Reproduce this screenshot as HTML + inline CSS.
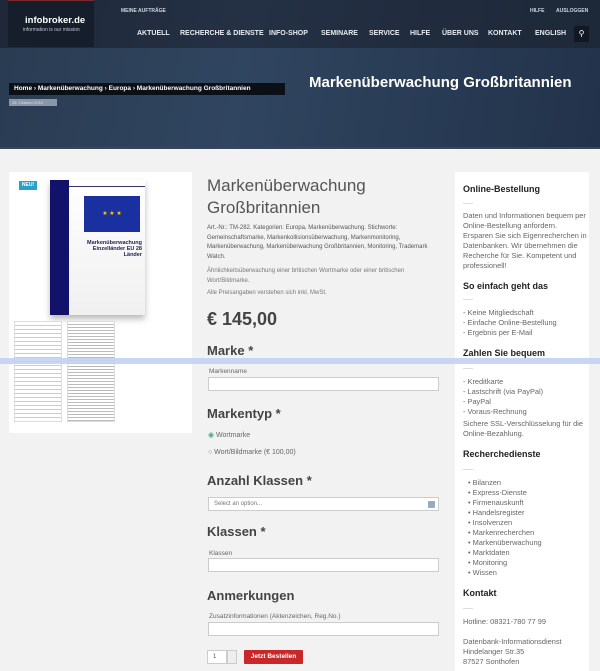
<!DOCTYPE html>
<html><head><meta charset="utf-8"><style>
*{margin:0;padding:0;box-sizing:border-box}
body{width:600px;height:671px;overflow:hidden;background:#f2f2f2;font-family:"Liberation Sans",sans-serif;position:relative;color:#555}
.a{position:absolute}
.hd{left:0;top:0;width:600px;height:48px;background:linear-gradient(100deg,#1e2838 0%,#243044 40%,#1d2838 100%)}
.hero{left:0;top:48px;width:600px;height:100px;background:linear-gradient(100deg,#2a3c52 0%,#304560 40%,#22324a 100%)}
.nav{color:#e8ecf0;font-size:7px;font-weight:bold;top:30px}
.top{color:#cfd6de;font-size:5px;top:8px;font-weight:bold}
.sb h4{font-size:9px;color:#222;font-weight:bold;position:absolute;left:463px}
.sb p{font-size:7.4px;line-height:10px;color:#666;position:absolute;left:463px}
.hr{position:absolute;left:463px;width:10px;height:1px;background:#ddd}
h2{position:absolute;left:207px;font-size:13px;color:#444;font-weight:bold}
.lbl{position:absolute;left:209px;font-size:6.5px;color:#666}
.in{position:absolute;left:208px;width:231px;height:14px;background:#fff;border:1px solid #ccc}
</style></head><body>
<div class="a hd"></div>
<div class="a hero"></div>
<div class="a" style="left:8px;top:0;width:86px;height:47px;background:#161e2b;border-top:1px solid #7a2a2a"></div>
<div class="a" style="left:25px;top:15px;color:#fff;font-size:9.5px;font-weight:bold">infobroker.de</div>
<div class="a" style="left:23px;top:27px;color:#c0c6ce;font-size:5px">information is our mission</div>
<div class="a top" style="left:121px">MEINE AUFTRÄGE</div>
<div class="a top" style="left:530px">HILFE</div>
<div class="a top" style="left:556px">AUSLOGGEN</div>
<div class="a nav" style="left:137px">AKTUELL</div>
<div class="a nav" style="left:180px">RECHERCHE &amp; DIENSTE</div>
<div class="a nav" style="left:269px">INFO-SHOP</div>
<div class="a nav" style="left:321px">SEMINARE</div>
<div class="a nav" style="left:369px">SERVICE</div>
<div class="a nav" style="left:410px">HILFE</div>
<div class="a nav" style="left:442px">ÜBER UNS</div>
<div class="a nav" style="left:488px">KONTAKT</div>
<div class="a nav" style="left:535px">ENGLISH</div>
<div class="a" style="left:574px;top:26px;width:15px;height:16px;background:#111822;color:#fff;font-size:8px;text-align:center;line-height:16px">⚲</div>
<div class="a" style="left:9px;top:83px;width:276px;height:12px;background:#0b0f16;color:#fff;font-size:6.5px;font-weight:bold;line-height:12px;padding-left:5px">Home › Markenüberwachung › Europa › Markenüberwachung Großbritannien</div>
<div class="a" style="left:9px;top:99px;width:48px;height:7px;background:#8a97a6;color:#dde;font-size:4px;line-height:7px;padding-left:3px">28. Oktober 2015</div>
<div class="a" style="left:309px;top:74px;color:#fff;font-size:15px;font-weight:bold">Markenüberwachung Großbritannien</div>
<div class="a" style="left:0;top:147px;width:600px;height:2px;background:#3a4656"></div>

<div class="a" style="left:9px;top:172px;width:183px;height:261px;background:#fff"></div>
<div class="a" style="left:19px;top:181px;width:18px;height:9px;background:#2aa0c8;color:#fff;font-size:5px;font-weight:bold;text-align:center;line-height:9px">NEU!</div>
<div class="a" style="left:50px;top:180px;width:95px;height:135px;background:linear-gradient(#fff,#f0f0f0);box-shadow:0 4px 6px #bbb"></div>
<div class="a" style="left:50px;top:180px;width:19px;height:135px;background:#12126a"></div>
<div class="a" style="left:69px;top:186px;width:76px;height:1px;background:#336"></div>
<div class="a" style="left:84px;top:196px;width:56px;height:36px;background:#1a2fa0;color:#fc0;font-size:6px;text-align:center;line-height:36px">★ ★ ★</div>
<div class="a" style="left:74px;top:240px;width:68px;text-align:right;font-size:5.5px;font-weight:bold;color:#225">Markenüberwachung<br>Einzelländer EU 28 Länder</div>
<div class="a" style="left:14px;top:321px;width:48px;height:101px;background:#fff;border:1px solid #ddd;background-image:repeating-linear-gradient(#fff 0 3px,#ccc 3px 4px)"></div>
<div class="a" style="left:67px;top:321px;width:48px;height:101px;background:#fff;border:1px solid #ddd;background-image:repeating-linear-gradient(#fff 0 2px,#bbb 2px 3px)"></div>

<div class="a" style="left:207px;top:175px;font-size:17px;color:#555;line-height:22px">Markenüberwachung<br>Großbritannien</div>
<div class="a" style="left:207px;top:224px;width:228px;font-size:6px;line-height:9.5px;color:#555">Art.-Nr.: TM-282. Kategorien: Europa, Markenüberwachung. Stichworte: Gemeinschaftsmarke, Markenkollisionsüberwachung, Markenmonitoring, Markenüberwachung, Markenüberwachung Großbritannien, Monitoring, Trademark Watch.</div>
<div class="a" style="left:207px;top:266px;width:205px;font-size:6px;line-height:10px;color:#777">Ähnlichkeitsüberwachung einer britischen Wortmarke oder einer britischen Wort/Bildmarke.</div>
<div class="a" style="left:207px;top:290px;font-size:6px;color:#777">Alle Preisangaben verstehen sich inkl. MwSt.</div>
<div class="a" style="left:207px;top:309px;font-size:18px;font-weight:bold;color:#444">€ 145,00</div>
<h2 style="top:343px">Marke *</h2>
<div class="lbl" style="top:368px">Markenname</div>
<div class="in" style="top:377px"></div>
<h2 style="top:406px">Markentyp *</h2>
<div class="a" style="left:208px;top:431px;font-size:7px;color:#666"><span style="color:#4a8">◉</span> Wortmarke</div>
<div class="a" style="left:208px;top:449px;font-size:7px;color:#666"><span style="color:#68a">○</span> Wort/Bildmarke (€ 100,00)</div>
<h2 style="top:473px">Anzahl Klassen *</h2>
<div class="in" style="top:497px;font-size:6px;color:#777;padding:3px 5px">Select an option...<span style="position:absolute;right:3px;top:3px;width:7px;height:7px;background:#9ab;border-radius:1px"></span></div>
<h2 style="top:524px">Klassen *</h2>
<div class="lbl" style="top:550px">Klassen</div>
<div class="in" style="top:558px"></div>
<h2 style="top:588px">Anmerkungen</h2>
<div class="lbl" style="top:613px">Zusatzinformationen (Aktenzeichen, Reg.No.)</div>
<div class="in" style="top:622px"></div>
<div class="a" style="left:207px;top:650px;width:20px;height:14px;background:#fff;border:1px solid #ccc;font-size:6px;line-height:12px;padding-left:5px">1</div>
<div class="a" style="left:227px;top:650px;width:10px;height:14px;background:#eee;border:1px solid #ccc"></div>
<div class="a" style="left:244px;top:650px;width:59px;height:14px;background:#c8282a;color:#fff;font-size:6.5px;font-weight:bold;text-align:center;line-height:14px;border-radius:1px">Jetzt Bestellen</div>

<div class="a" style="left:455px;top:172px;width:134px;height:499px;background:#fff"></div>
<div class="sb">
<h4 style="top:184px">Online-Bestellung</h4><div class="hr" style="top:203px"></div>
<p style="top:211px;width:124px">Daten und Informationen bequem per Online-Bestellung anfordern. Ersparen Sie sich Eigenrecherchen in Datenbanken. Wir übernehmen die Recherche für Sie. Kompetent und professionell!</p>
<h4 style="top:281px">So einfach geht das</h4><div class="hr" style="top:299px"></div>
<p style="top:308px">- Keine Mitgliedschaft<br>- Einfache Online-Bestellung<br>- Ergebnis per E-Mail</p>
<h4 style="top:348px">Zahlen Sie bequem</h4><div class="hr" style="top:368px"></div>
<p style="top:377px">- Kreditkarte<br>- Lastschrift (via PayPal)<br>- PayPal<br>- Voraus-Rechnung</p>
<p style="top:419px;width:124px">Sichere SSL-Verschlüsselung für die Online-Bezahlung.</p>
<h4 style="top:449px">Recherchedienste</h4><div class="hr" style="top:469px"></div>
<p style="top:478px;left:468px">• Bilanzen<br>• Express-Dienste<br>• Firmenauskunft<br>• Handelsregister<br>• Insolvenzen<br>• Markenrecherchen<br>• Markenüberwachung<br>• Marktdaten<br>• Monitoring<br>• Wissen</p>
<h4 style="top:588px">Kontakt</h4><div class="hr" style="top:608px"></div>
<p style="top:617px">Hotline: 08321-780 77 99</p>
<p style="top:637px">Datenbank-Informationsdienst<br>Hindelanger Str.35<br>87527 Sonthofen</p>
</div>
<div class="a" style="left:0;top:358px;width:600px;height:6px;background:#c3d1f2;opacity:.9"></div>
</body></html>
